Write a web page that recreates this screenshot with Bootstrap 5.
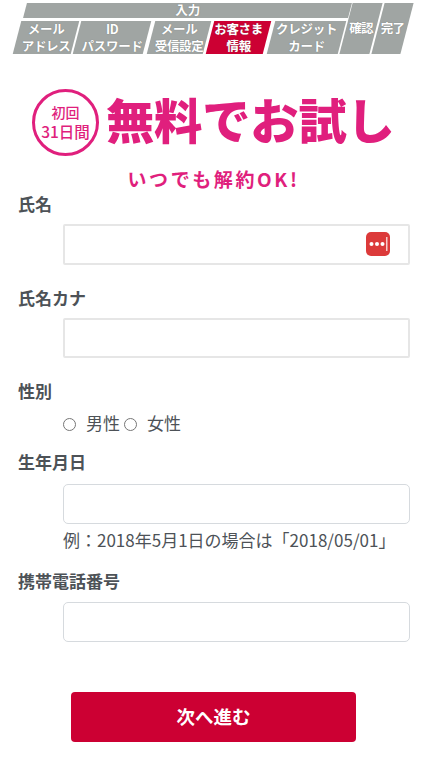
<!DOCTYPE html>
<html lang="ja">
<head>
<meta charset="utf-8">
<link href="https://cdn.jsdelivr.net/npm/bootstrap@5.3.0/dist/css/bootstrap.min.css" rel="stylesheet">
<style>
html,body{height:759px;overflow:hidden;}
body{font-family:"Noto Sans CJK JP","Liberation Sans",sans-serif;color:#4d5257;font-size:17px;background:#fff;}
.stepper{height:54px;padding:3px 0 0 17px;}
.step-left{width:325px;gap:3px;}
.step-top{height:15px;margin-left:8px;width:325px;background:#a0a5a3;transform:skewX(-14.5deg);}
.step-cell{height:33px;background:#a0a5a3;transform:skewX(-14.5deg);flex:none;}
.step-tall{height:51px;background:#a0a5a3;transform:skewX(-14.5deg);flex:none;}
.step-on{background:#cc0033;}
.step-txt{display:block;transform:skewX(14.5deg);color:#fff;font-weight:700;font-size:12.5px;line-height:17px;text-align:center;white-space:nowrap;text-shadow:0 0 1px rgba(90,95,95,.7);}
.step-top .step-txt{line-height:13px;}
.step-cell .step-txt{letter-spacing:-.3px;margin-top:-1px;}
.step-tall .step-txt{line-height:50px;letter-spacing:-.6px;}
.w1{width:58px}.w2{width:70px}.w3{width:56px}.w4{width:57px}.w5{width:71px}
.w6{width:30px}.w7{width:29px}
.gap1{margin-left:2px}.gap2{margin-left:4px}.gap3{margin-left:3px}
.promo{height:136px;color:#e01f7d;}
.promo-head{padding:31px 0 0 32px;}
.seal{width:67px;height:67px;border:3px solid #e01f7d;border-radius:50%;font-size:15.5px;font-weight:500;flex:none;}
.seal span{line-height:19px;}
.seal b{font-size:14px;font-weight:500;line-height:19px;}
.promo-title{font-size:48.3px;font-weight:900;line-height:66px;margin:0 0 8px 7px;white-space:nowrap;letter-spacing:-.2px;}
.promo-sub{font-size:19px;font-weight:700;line-height:22px;letter-spacing:2.6px;margin-top:9px;padding-right:0;}
.fields{padding:0 17px 0 18px;margin-top:2px;}
.fld-label{font-weight:700;font-size:17px;line-height:24px;display:block;color:#4d5257;margin:0;}
.fld-input{display:block;width:347px;height:41px;margin:8px 0 21px 45px;border:1px solid #d6dade;border-radius:5px;background:#fff;padding:0 12px;}
.fld-thick{border:2px solid #e6e6e6;border-radius:2px;}
.fld-h40{height:40px;}
.mt-a{margin-top:10px;}
.mt-b{margin-top:9px;}
.pw-wrap{position:relative;}
.pw-icon{position:absolute;right:20px;top:8px;width:24px;height:24px;}
.gender{margin:8px 0 15px 45px;line-height:24px;font-size:17px;}
.radio-o{width:13px;height:13px;margin:0 10px 0 0;vertical-align:-1px;appearance:none;border:1.5px solid #767676;border-radius:50%;background:#fff;}
.gender label{margin-right:4px;}
.hint{margin:4px 0 17px 45px;line-height:24px;font-size:17px;white-space:nowrap;}
.next-btn{display:block;width:285px;height:50px;margin:50px 0 0 53px;background:#cc0033;border:0;border-radius:4px;color:#fff;font-weight:700;font-size:18.5px;}
</style>
</head>
<body class="m-0">
<div class="stepper d-flex">
  <div class="step-left d-flex flex-column">
    <div class="step-top"><span class="step-txt">入力</span></div>
    <div class="d-flex">
      <div class="step-cell w1"><span class="step-txt">メール<br>アドレス</span></div>
      <div class="step-cell w2 gap1"><span class="step-txt">ID<br>パスワード</span></div>
      <div class="step-cell w3 gap2"><span class="step-txt">メール<br>受信設定</span></div>
      <div class="step-cell w4 gap3 step-on"><span class="step-txt">お客さま<br>情報</span></div>
      <div class="step-cell w5 gap2"><span class="step-txt">クレジット<br>カード</span></div>
    </div>
  </div>
  <div class="step-tall ms-1 w6"><span class="step-txt">確認</span></div>
  <div class="step-tall gap1 w7"><span class="step-txt">完了</span></div>
</div>
<div class="promo">
  <div class="promo-head d-flex align-items-center">
    <div class="seal d-flex flex-column align-items-center justify-content-center text-center"><b>初回</b><span>31日間</span></div>
    <div class="promo-title">無料でお試し</div>
  </div>
  <div class="promo-sub text-center">いつでも解約OK!</div>
</div>
<form class="fields">
  <label class="fld-label">氏名</label>
  <div class="pw-wrap">
    <input class="fld-input fld-thick" type="text">
    <svg class="pw-icon" viewBox="0 0 24 24"><rect width="24" height="24" rx="5" fill="#dc3a3a"/><circle cx="5.5" cy="12" r="2" fill="#fff"/><circle cx="11" cy="12" r="2" fill="#fff"/><circle cx="16.5" cy="12" r="2" fill="#fff"/><rect x="20" y="5" width="1.5" height="14" fill="#f6c9c9"/></svg>
  </div>
  <label class="fld-label">氏名カナ</label>
  <input class="fld-input fld-thick fld-h40" type="text">
  <label class="fld-label">性別</label>
  <div class="gender"><label><input class="radio-o" type="radio" name="g">男性</label><label><input class="radio-o" type="radio" name="g">女性</label></div>
  <label class="fld-label">生年月日</label>
  <input class="fld-input fld-h40 mb-0 mt-a" type="text">
  <div class="hint">例：2018年5月1日の場合は「2018/05/01」</div>
  <label class="fld-label">携帯電話番号</label>
  <input class="fld-input fld-h40 mb-0 mt-b" type="text">
  <button class="next-btn" type="button">次へ進む</button>
</form>
<script src="https://cdn.jsdelivr.net/npm/bootstrap@5.3.0/dist/js/bootstrap.bundle.min.js"></script>
</body>
</html>
